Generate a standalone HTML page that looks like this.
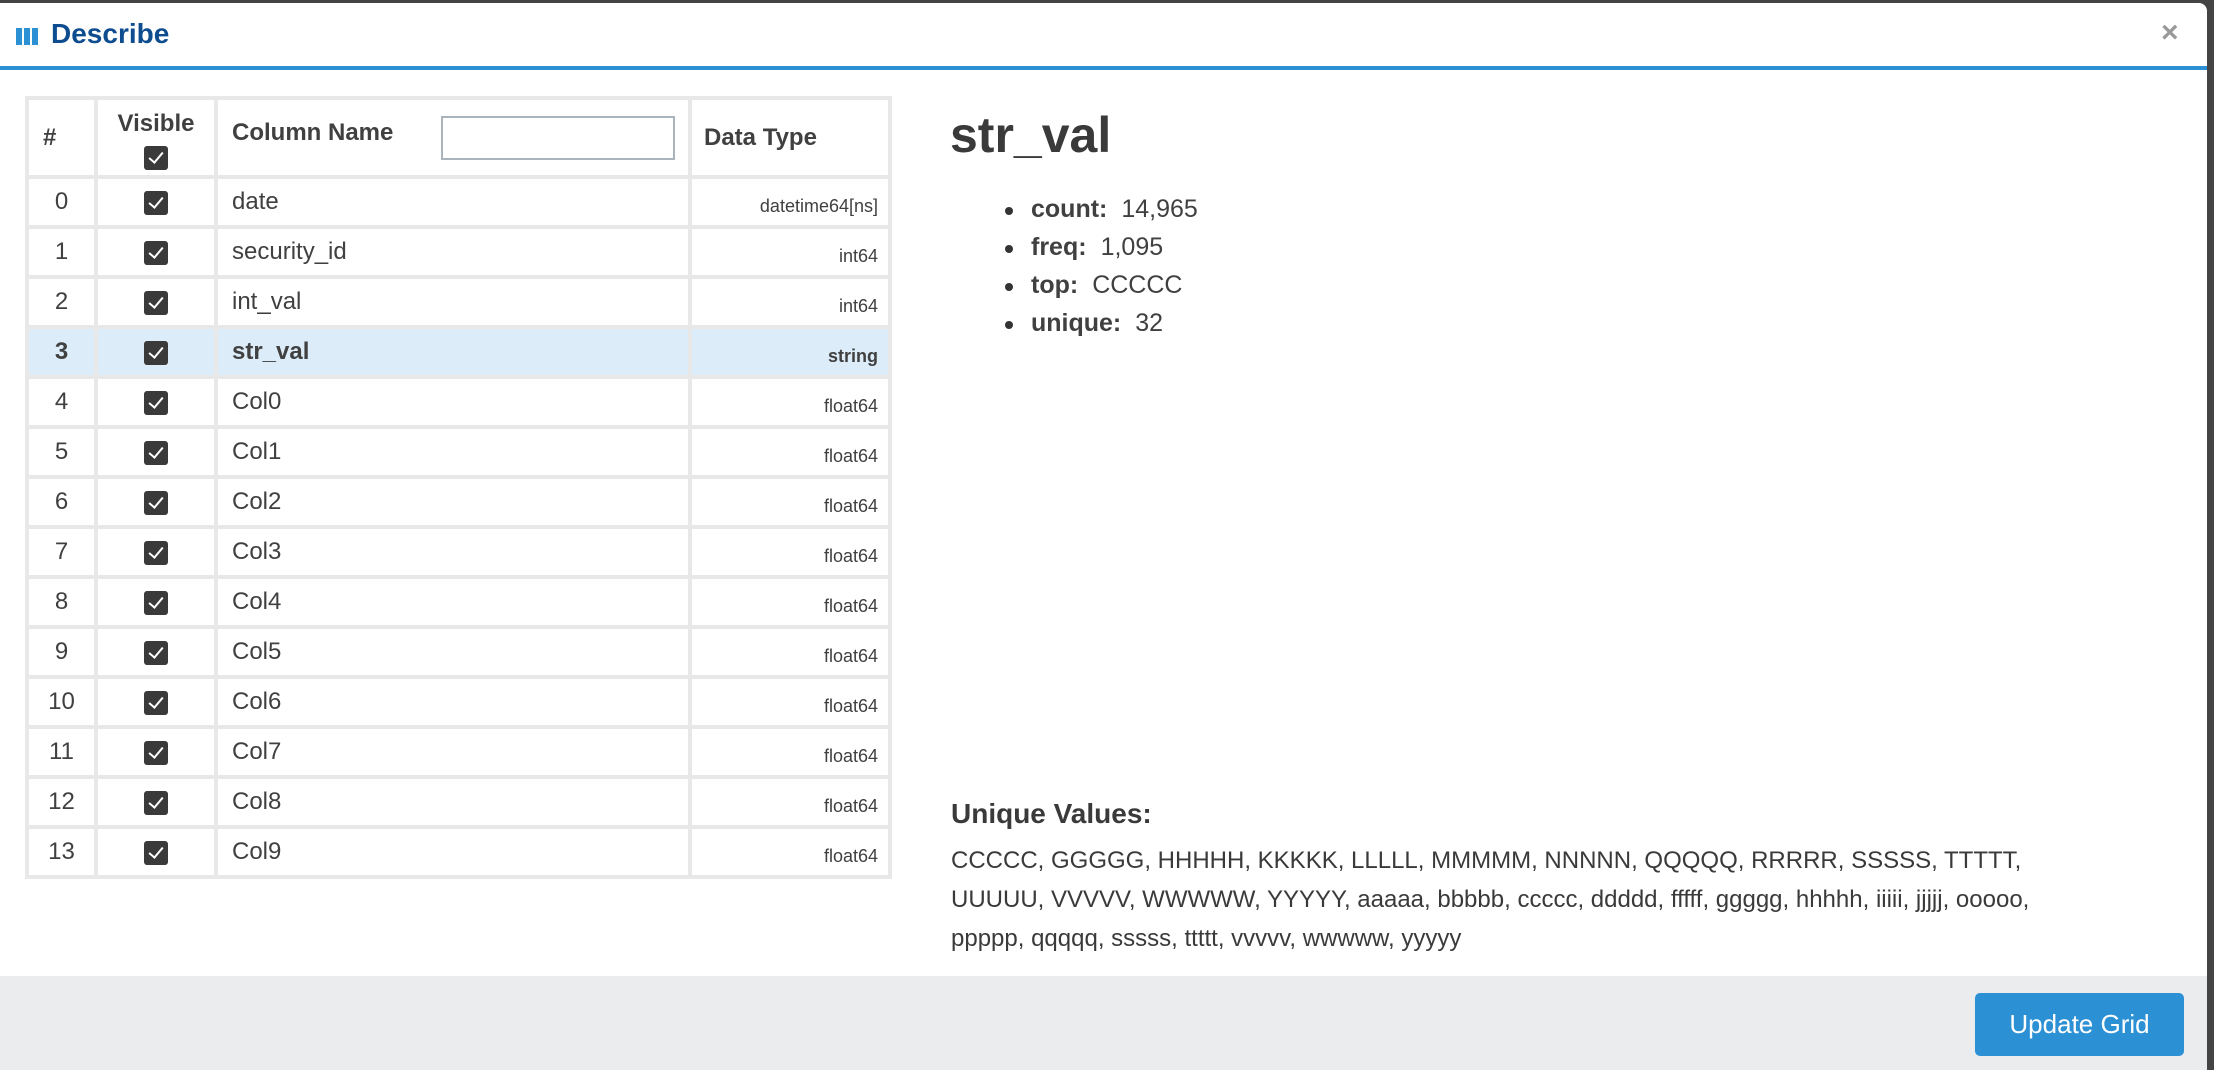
<!DOCTYPE html>
<html><head><meta charset="utf-8"><style>
*{margin:0;padding:0;box-sizing:border-box}
body{width:2214px;height:1070px;background:#444;font-family:"Liberation Sans",sans-serif;color:#404040;overflow:hidden;position:relative}
.modal{position:absolute;left:0;top:3px;width:2207px;height:1067px;background:#fff;border-radius:0 8px 0 0;overflow:hidden}
.hdr{position:absolute;left:0;top:0;width:100%;height:67px;border-bottom:4px solid #2b90d4}
.title{position:absolute;left:51px;top:15px;font-size:28px;font-weight:bold;color:#0d4d8f}
.ico{position:absolute;left:16px;top:25px;width:23px;height:17px}
.ico i{position:absolute;top:0;width:6px;height:17px;background:#2b90d4}
.close{position:absolute;left:2161px;top:13px;font-size:30px;font-weight:bold;color:#999}
table{position:absolute;left:25px;top:93px;border-collapse:collapse;table-layout:fixed;width:863px}
td,th{border:4px solid #e8e8e8;font-size:24px;vertical-align:middle}
th{font-weight:bold;height:79px;text-align:left}
td{height:50px}
td.n{text-align:center}
td.c{text-align:center}
td.t{text-align:right;font-size:18px;padding-right:10px;padding-top:8px}
td.nm{padding-left:14px}
tr.hl td{background:#dcedf9;font-weight:bold}
.cb{display:inline-block;width:24px;height:24px;background:#3a3a3a;border-radius:3px;vertical-align:middle;position:relative}
.cb:after{content:"";position:absolute;left:8px;top:3px;width:6px;height:12px;border:solid #fff;border-width:0 2.5px 2.5px 0;transform:rotate(40deg)}
.inp{position:absolute;left:441px;top:113px;width:234px;height:44px;border:2px solid #a9b4bc;background:#fff}
h2{position:absolute;left:950px;top:103px;font-size:50px;font-weight:bold;color:#3a3a3a}
ul{position:absolute;left:1031px;top:192px;list-style:none}
ul li{font-size:25px;height:38px;position:relative}
ul li:before{content:"";position:absolute;left:-26px;top:12px;width:8px;height:8px;border-radius:50%;background:#333}
ul b{margin-right:14px}
.uvh{position:absolute;left:951px;top:795px;font-size:28px;font-weight:bold;color:#3a3a3a}
.uv{position:absolute;left:951px;top:838px;width:1240px;font-size:24px;line-height:39px;color:#3a3a3a}
.ftr{position:absolute;left:0;top:973px;width:100%;height:100px;background:#ebecee}
.btn{position:absolute;left:1975px;top:17px;width:209px;height:63px;background:#2b90d4;border-radius:5px;color:#fff;font-size:26px;text-align:center;line-height:63px}
</style></head><body>
<div class="modal">
<div class="hdr"><div class="ico"><i style="left:0"></i><i style="left:8px"></i><i style="left:16px"></i></div><div class="title">Describe</div><div class="close">×</div></div>
<table>
<colgroup><col style="width:69px"><col style="width:120px"><col style="width:474px"><col style="width:200px"></colgroup>
<tr><th style="padding-left:14px">#</th><th style="text-align:center;padding-top:4px">Visible<br><span class="cb" style="margin-top:8px"></span></th><th style="padding-left:14px;padding-bottom:10px">Column Name</th><th style="padding-left:12px">Data Type</th></tr>
<tr><td class="n">0</td><td class="c"><span class="cb"></span></td><td class="nm">date</td><td class="t">datetime64[ns]</td></tr>
<tr><td class="n">1</td><td class="c"><span class="cb"></span></td><td class="nm">security_id</td><td class="t">int64</td></tr>
<tr><td class="n">2</td><td class="c"><span class="cb"></span></td><td class="nm">int_val</td><td class="t">int64</td></tr>
<tr class="hl"><td class="n">3</td><td class="c"><span class="cb"></span></td><td class="nm">str_val</td><td class="t">string</td></tr>
<tr><td class="n">4</td><td class="c"><span class="cb"></span></td><td class="nm">Col0</td><td class="t">float64</td></tr>
<tr><td class="n">5</td><td class="c"><span class="cb"></span></td><td class="nm">Col1</td><td class="t">float64</td></tr>
<tr><td class="n">6</td><td class="c"><span class="cb"></span></td><td class="nm">Col2</td><td class="t">float64</td></tr>
<tr><td class="n">7</td><td class="c"><span class="cb"></span></td><td class="nm">Col3</td><td class="t">float64</td></tr>
<tr><td class="n">8</td><td class="c"><span class="cb"></span></td><td class="nm">Col4</td><td class="t">float64</td></tr>
<tr><td class="n">9</td><td class="c"><span class="cb"></span></td><td class="nm">Col5</td><td class="t">float64</td></tr>
<tr><td class="n">10</td><td class="c"><span class="cb"></span></td><td class="nm">Col6</td><td class="t">float64</td></tr>
<tr><td class="n">11</td><td class="c"><span class="cb"></span></td><td class="nm">Col7</td><td class="t">float64</td></tr>
<tr><td class="n">12</td><td class="c"><span class="cb"></span></td><td class="nm">Col8</td><td class="t">float64</td></tr>
<tr><td class="n">13</td><td class="c"><span class="cb"></span></td><td class="nm">Col9</td><td class="t">float64</td></tr>
</table>
<div class="inp"></div>
<h2>str_val</h2>
<ul><li><b>count:</b>14,965</li><li><b>freq:</b>1,095</li><li><b>top:</b>CCCCC</li><li><b>unique:</b>32</li></ul>
<div class="uvh">Unique Values:</div>
<div class="uv">CCCCC, GGGGG, HHHHH, KKKKK, LLLLL, MMMMM, NNNNN, QQQQQ, RRRRR, SSSSS, TTTTT,<br>UUUUU, VVVVV, WWWWW, YYYYY, aaaaa, bbbbb, ccccc, ddddd, fffff, ggggg, hhhhh, iiiii, jjjjj, ooooo,<br>ppppp, qqqqq, sssss, ttttt, vvvvv, wwwww, yyyyy</div>
<div class="ftr"><div class="btn">Update Grid</div></div>
</div>
</body></html>
